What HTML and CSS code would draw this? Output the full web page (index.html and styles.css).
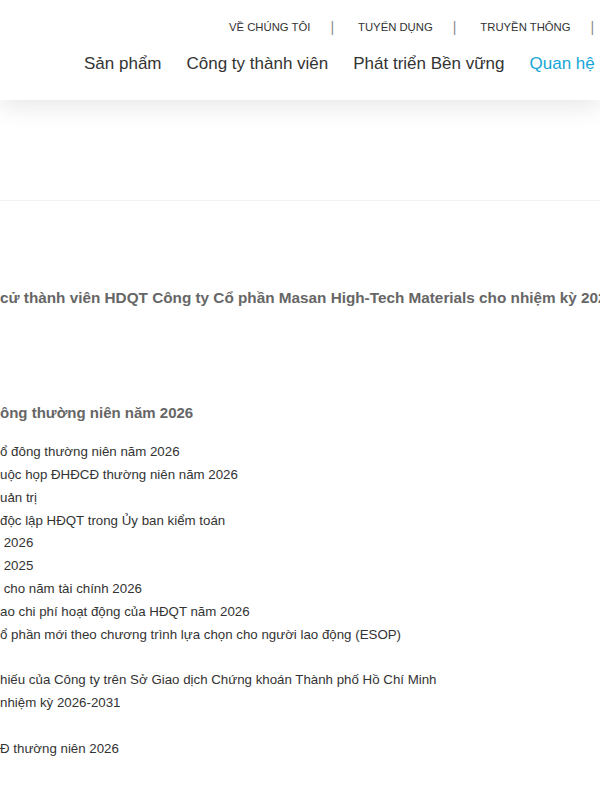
FILE: index.html
```html
<!DOCTYPE html>
<html lang="vi">
<head>
<meta charset="utf-8">
<title>Quan hệ cổ đông</title>
<link rel="stylesheet" href="styles.css">
</head>
<body>
<header class="site-header">
  <nav class="top-nav">
    <a class="top-link">VỀ CHÚNG TÔI</a>
    <span class="sep">|</span>
    <a class="top-link">TUYỂN DỤNG</a>
    <span class="sep">|</span>
    <a class="top-link">TRUYỀN THÔNG</a>
    <span class="sep">|</span>
  </nav>
  <nav class="main-nav">
    <a class="main-link">Sản phẩm</a>
    <a class="main-link">Công ty thành viên</a>
    <a class="main-link">Phát triển Bền vững</a>
    <a class="main-link active">Quan hệ cổ đông</a>
  </nav>
</header>
<div class="spacer"></div>
<main class="content">
  <h2 class="title">cử thành viên HDQT Công ty Cổ phần Masan High-Tech Materials cho nhiệm kỳ 2026-2031</h2>
  <h3 class="heading">ông thường niên năm 2026</h3>
  <ul class="doc-list">
    <li>ổ đông thường niên năm 2026</li>
    <li>uộc họp ĐHĐCĐ thường niên năm 2026</li>
    <li>uản trị</li>
    <li>độc lập HĐQT trong Ủy ban kiểm toán</li>
    <li> 2026</li>
    <li> 2025</li>
    <li> cho năm tài chính 2026</li>
    <li>ao chi phí hoạt động của HĐQT năm 2026</li>
    <li>ổ phần mới theo chương trình lựa chọn cho người lao động (ESOP)</li>
    <li>&nbsp;</li>
    <li>hiếu của Công ty trên Sở Giao dịch Chứng khoán Thành phố Hồ Chí Minh</li>
    <li>nhiệm kỳ 2026-2031</li>
    <li>&nbsp;</li>
    <li>Đ thường niên 2026</li>
  </ul>
</main>
</body>
</html>
```
FILE: styles.css
```css
html, body {
  margin: 0;
  padding: 0;
  background: #fff;
  overflow: hidden;
  font-family: "Liberation Sans", Arial, sans-serif;
}
a { text-decoration: none; }

.site-header {
  height: 100px;
  background: #fff;
  box-shadow: 0 6px 24px rgba(0, 0, 0, 0.1);
  position: relative;
  z-index: 2;
  white-space: nowrap;
  overflow: hidden;
}
.top-nav {
  display: flex;
  align-items: center;
  padding: 18px 0 0 229px;
  height: 18px;
  font-size: 11.3px;
  color: #333;
}
.top-link { color: #333; flex: none; }
.sep {
  color: #888;
  margin: 0 24px 0 20px;
  font-size: 14px;
  flex: none;
}
.main-nav {
  display: flex;
  gap: 25px;
  padding: 18px 0 0 84px;
  font-size: 17px;
}
.main-link { color: #333; flex: none; }
.main-link.active { color: #16a6d9; }

.spacer {
  height: 100px;
  border-bottom: 1px solid #f3f3f3;
}

.content {
  white-space: nowrap;
  overflow: hidden;
}
.title {
  margin: 88px 0 0;
  font-size: 15.3px;
  font-weight: bold;
  color: #666;
  line-height: 18px;
}
.heading {
  margin: 97px 0 0;
  font-size: 15px;
  font-weight: bold;
  color: #666;
  line-height: 18px;
}
.doc-list {
  list-style: none;
  margin: 19px 0 0;
  padding: 0;
  font-size: 13.3px;
  color: #333;
}
.doc-list li {
  line-height: 22.85px;
  white-space: pre;
}
```
